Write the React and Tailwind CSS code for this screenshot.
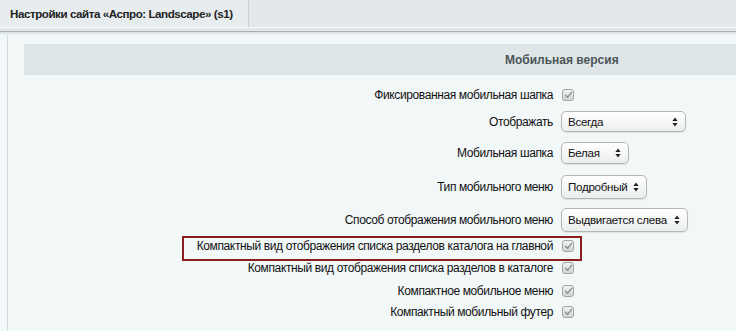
import React from "react";

function Checkbox() {
  return (
    <div className="ml-[9px] w-[12px] h-[12px] rounded-[3px] border border-[#9fa4a5] bg-gradient-to-b from-[#f2f3f3] to-[#d2d5d5] flex items-center justify-center">
      <svg width="9" height="8" viewBox="0 0 9 8">
        <path d="M1.5 4.2 L3.6 6.3 L7.6 1.3" fill="none" stroke="#858a8b" strokeWidth="1.3" strokeLinecap="round" strokeLinejoin="round" />
      </svg>
    </div>
  );
}

function Select({ value, w, h }) {
  return (
    <div
      className={`ml-[8px] ${w} ${h} rounded-[5px] border border-[#b3b7b8] bg-gradient-to-b from-[#ffffff] to-[#eceeee] shadow-[0_1px_1px_rgba(0,0,0,0.08)] flex items-center justify-between pl-[6px] pr-[7px] text-[#111] whitespace-nowrap text-[11.6px] tracking-[-0.3px]`}
    >
      <span>{value}</span>
      <svg width="6" height="10" viewBox="0 0 6 10" className="shrink-0">
        <path d="M3 0.5 L5.6 4 L0.4 4 Z" fill="#222" />
        <path d="M3 9.5 L5.6 6 L0.4 6 Z" fill="#222" />
      </svg>
    </div>
  );
}

function Row({ label, h, children, highlight }) {
  return (
    <div className={`relative flex items-center ${h}`}>
      {highlight && (
        <div className="absolute left-[158px] top-[1px] w-[400px] h-[25px] border-2 border-[#8c1c1f]" />
      )}
      <div className="w-[529px] text-right text-[#111] leading-none whitespace-nowrap">{label}</div>
      {children}
    </div>
  );
}

export default function App() {
  return (
    <div className="w-[736px] h-[331px] overflow-hidden bg-[#f2f7f8] font-['Liberation_Sans',Arial,sans-serif] text-[12px] tracking-[-0.38px]">
      <div className="h-[27px] flex bg-[#e3e9eb]">
        <div className="w-[249px] border-r border-[#c8d0d2] bg-[#e7edef] flex items-center pl-[10px] font-bold text-[#222] whitespace-nowrap text-[11.6px] tracking-[-0.45px]">
          Настройки сайта «Аспро: Landscape» (s1)
        </div>
      </div>
      <div className="h-px bg-[#f5f8f9]" />
      <div className="h-[3px] bg-[#e2e8ea]" />
      <div className="h-[1px] bg-[#a7b0b2]" />
      <div className="h-[3px] bg-gradient-to-b from-[#d9e1e3] to-[#edf3f4]" />
      <div className="flex h-[296px]">
        <div className="w-[7px]" />
        <div className="w-px bg-[#d2d9db]" />
        <div className="flex-1 pl-[16px] pt-[9px]">
          <div className="h-[31px] bg-[#dfe6e8] flex items-center pl-[481px] font-bold text-[#4b5557] text-[12px] tracking-normal whitespace-nowrap">
            Мобильная версия
          </div>
          <div className="pt-[9px]">
            <Row label="Фиксированная мобильная шапка" h="h-[22px]">
              <Checkbox />
            </Row>
            <Row label="Отображать" h="h-[31px]">
              <Select value="Всегда" w="w-[125px]" h="h-[21px]" />
            </Row>
            <Row label="Мобильная шапка" h="h-[32px]">
              <Select value="Белая" w="w-[68px]" h="h-[22px]" />
            </Row>
            <Row label="Тип мобильного меню" h="h-[36px]">
              <Select value="Подробный" w="w-[86px]" h="h-[24px]" />
            </Row>
            <Row label="Способ отображения мобильного меню" h="h-[30px]">
              <Select value="Выдвигается слева" w="w-[127px]" h="h-[24px]" />
            </Row>
            <Row label="Компактный вид отображения списка разделов каталога на главной" h="h-[21px]" highlight>
              <Checkbox />
            </Row>
            <Row label="Компактный вид отображения списка разделов в каталоге" h="h-[24px]">
              <Checkbox />
            </Row>
            <Row label="Компактное мобильное меню" h="h-[21px]">
              <Checkbox />
            </Row>
            <Row label="Компактный мобильный футер" h="h-[22px]">
              <Checkbox />
            </Row>
          </div>
        </div>
      </div>
    </div>
  );
}
